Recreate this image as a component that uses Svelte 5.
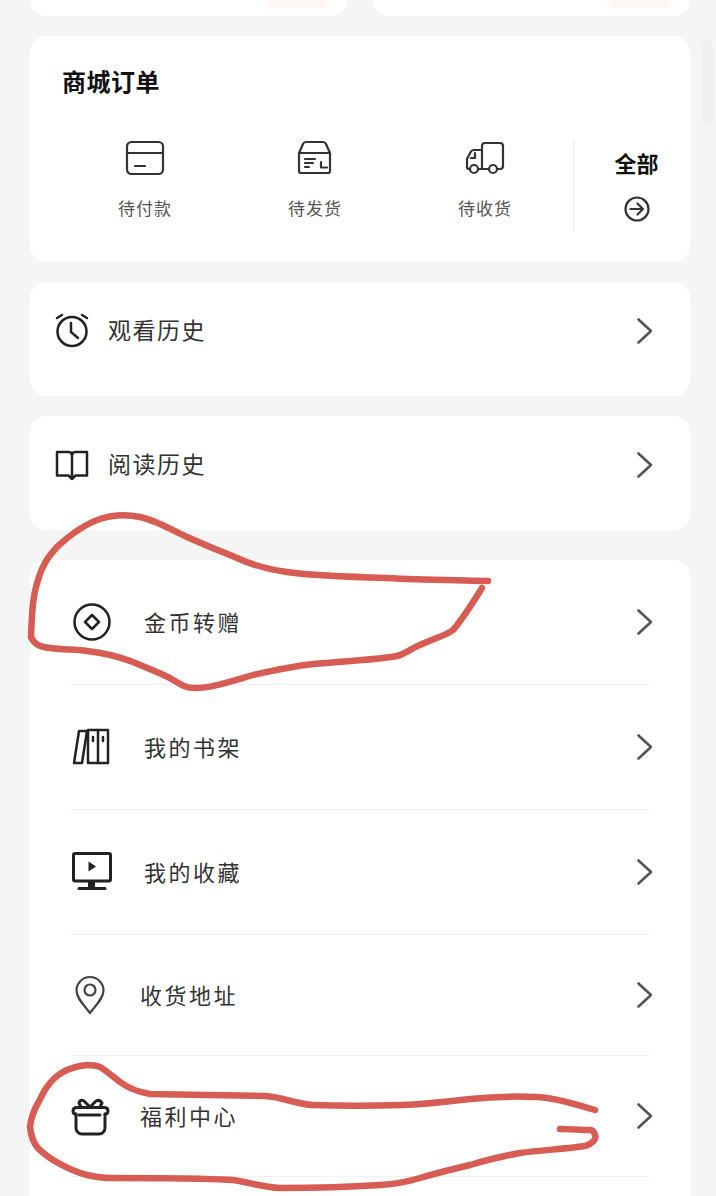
<script>
  const orders = [
    { label: '待付款', icon: 'card' },
    { label: '待发货', icon: 'box' },
    { label: '待收货', icon: 'truck' }
  ];
  const history = [
    { label: '观看历史', icon: 'clock' },
    { label: '阅读历史', icon: 'book' }
  ];
  const menu = [
    { label: '金币转赠', icon: 'coin' },
    { label: '我的书架', icon: 'shelf' },
    { label: '我的收藏', icon: 'tv' },
    { label: '收货地址', icon: 'pin', tight: true },
    { label: '福利中心', icon: 'gift', tight: true }
  ];
</script>

{#snippet chevron()}
  <svg class="chevron" width="18" height="28" viewBox="0 0 18 28"><path d="M2.5 2.5 L15 14 L2.5 25.5" /></svg>
{/snippet}

{#snippet icon(name)}
  <svg class="icon i-{name}" width="40" height="40" viewBox="0 0 40 40">
    {#if name === 'card'}
      <rect x="2" y="2" width="36" height="32" rx="4.5" />
      <path d="M2 13H38M10 26H20" />
    {:else if name === 'box'}
      <path d="M4 13 L8 4 Q9 2 11 2 H28 Q30 2 31 4 L35 13 V31 Q35 33 33 33 H6 Q4 33 4 31 Z" />
      <path d="M4 13H35M10 19H20M10 23H18M10 27H14M26 22V27.5H32" />
    {:else if name === 'truck'}
      <path d="M17 29 V6 Q17 3 20 3 H35 Q38 3 38 6 V26 Q38 29 35 29 H32 M24 29 H13 M5 29 H4 Q2 29 2 27 V19 L6 11.5 Q7 10 9 10 H17" />
      <circle cx="9" cy="29" r="4" />
      <circle cx="28" cy="29" r="4" />
      <path d="M10 13V18H6" />
    {:else if name === 'clock'}
      <circle cx="20" cy="20.5" r="14.5" />
      <path d="M19 12V21L26 27M5 7L10 4M35 7L30 4" />
    {:else if name === 'book'}
      <path d="M20 10 V34 M20 34 L16.5 30.5 H5 V7 H16 Q20 7 20 10 Q20 7 24 7 H35 V30.5 H23.5 L20 34" />
    {:else if name === 'coin'}
      <circle cx="20" cy="20" r="17.5" />
      <path d="M20 13 L27 20 L20 27 L13 20 Z" />
    {:else if name === 'shelf'}
      <path d="M7 4 H15 L10 36 H2 Z" />
      <rect x="16" y="3" width="20" height="33" />
      <path d="M26 3V36M21 10V14M31 10V14" />
    {:else if name === 'tv'}
      <rect x="1.5" y="1.5" width="37" height="27.5" rx="1.5" />
      <path class="solid" d="M16.5 9.5 L24 14.5 L16.5 19.5 Z" />
      <path class="solid" d="M16 30H23V35H16Z" />
      <path d="M7 36.5H33" />
    {:else if name === 'pin'}
      <path d="M20 38 C14 30 6.5 23 6.5 15.5 A13.5 13.5 0 0 1 33.5 15.5 C33.5 23 26 30 20 38 Z" />
      <circle cx="20" cy="15" r="5.5" />
    {:else if name === 'gift'}
      <path d="M6 18 V32 a6 6 0 0 0 6 6 H29 a6 6 0 0 0 6-6 V18" />
      <path d="M6 18 Q3 18 3 15 Q3 11.5 7 11.5 H34 Q38 11.5 38 15 Q38 18 35 18" />
      <path d="M9 19H30M20 11 L14 5 Q10 3 9 7 L11 11 M20 11 L26 5 Q30 3 32 7 L30 11" />
    {/if}
  </svg>
{/snippet}

<div class="page">
  <div class="top">
    <div class="stub"><span class="tint"></span></div>
    <div class="stub"><span class="tint"></span></div>
  </div>

  <section class="card orders">
    <h2>商城订单</h2>
    <div class="order-row">
      {#each orders as o}
        <div class="order">
          {@render icon(o.icon)}
          <span>{o.label}</span>
        </div>
      {/each}
      <div class="all">
        <strong>全部</strong>
        <svg class="icon i-arrow" width="26" height="26" viewBox="0 0 26 26">
          <circle cx="13" cy="13" r="11.5" />
          <path d="M6.5 13H19M13.5 7.5L19 13L13.5 18.5" />
        </svg>
      </div>
    </div>
  </section>

  {#each history as h}
    <section class="card history">
      {@render icon(h.icon)}
      <span>{h.label}</span>
      {@render chevron()}
    </section>
  {/each}

  <section class="card menu">
    {#each menu as m}
      <div class="menu-row" class:tight={m.tight}>
        <div class="menu-icon">{@render icon(m.icon)}</div>
        <span>{m.label}</span>
        {@render chevron()}
      </div>
    {/each}
  </section>

  <svg class="scribble" width="716" height="1196" viewBox="0 0 716 1196">
    <path d="M488 581 C450 580 420 580 387 578 C350 577 315 576 287 572 C265 569 250 564 237 558 C220 551 205 545 187 537 C170 529 155 520 140 517 C130 515 115 514 100 519 C85 524 70 535 57 547 C47 558 42 566 38 580 C33 595 32 610 31 637 C35 645 40 647 50 648 C65 650 75 649 87 651 C105 653 120 657 133 662 C150 669 160 673 170 678 C180 684 185 688 195 688 C210 688 225 683 253 675 C275 670 295 666 313 664 C345 661 375 660 397 656 C405 654 412 648 420 645 C435 638 445 636 453 630 C462 620 472 604 482 588" />
    <path d="M595 1110 C575 1104 555 1098 537 1097 C515 1096 490 1097 470 1099 C445 1102 425 1104 403 1105 C370 1106 340 1106 313 1105 C295 1104 283 1097 265 1096 C225 1095 190 1095 150 1094 C138 1092 128 1088 120 1082 C113 1077 107 1071 100 1067 C95 1065 92 1065 87 1065 C78 1066 70 1068 63 1072 C56 1076 51 1081 47 1087 C43 1092 41 1098 38 1103 C34 1110 31 1118 30 1127 C31 1135 33 1142 37 1147 C41 1152 47 1156 53 1160 C63 1166 75 1172 87 1175 C95 1177 104 1178 113 1178 C155 1178 195 1178 233 1180 C248 1182 262 1187 280 1188 C315 1188 350 1187 380 1185 C395 1184 407 1182 420 1178 C437 1173 453 1169 470 1165 C487 1160 503 1156 520 1153 C542 1150 565 1149 585 1146 C592 1144 597 1139 595 1135 C594 1131 592 1130 590 1130 C580 1130 570 1129 560 1129" />
  </svg>
</div>

<style>
  :global(body) {
    margin: 0;
    background: #f5f5f5;
  }

  .page {
    position: relative;
    width: 716px;
    height: 1196px;
    overflow: hidden;
    background: #f5f5f5;
    font-family: "Noto Sans CJK SC", sans-serif;
    color: #222;
  }

  .page::after {
    content: '';
    position: absolute;
    left: 702px;
    top: 40px;
    width: 11px;
    height: 84px;
    border-radius: 5px;
    background: #eff0f4;
  }

  .top {
    display: flex;
    gap: 26px;
    padding: 0 26px 0 30px;
    height: 36px;
  }

  .stub {
    flex: 1;
    height: 16px;
    background: #fff;
    border-radius: 0 0 16px 16px;
    position: relative;
    overflow: hidden;
  }

  .tint {
    position: absolute;
    right: 20px;
    top: -2px;
    width: 60px;
    height: 10px;
    background: #fdf4f1;
    filter: blur(3px);
  }

  .card {
    background: #fff;
    border-radius: 16px;
    margin: 0 26px 20px 30px;
  }

  .icon {
    fill: none;
    stroke: #222;
    stroke-width: 2.5;
    stroke-linejoin: round;
    stroke-linecap: round;
    flex: none;
  }

  .icon .solid {
    fill: #222;
    stroke: none;
  }

  .i-card,
  .i-box,
  .i-truck,
  .i-arrow {
    stroke: #333;
    stroke-width: 2.2;
  }

  .i-pin {
    stroke: #444;
    stroke-width: 2.2;
  }

  .i-tv,
  .i-gift {
    stroke-width: 3;
  }

  .chevron {
    fill: none;
    stroke: #555;
    stroke-width: 2.6;
    stroke-linecap: round;
    stroke-linejoin: round;
    flex: none;
  }

  .orders {
    height: 226px;
    box-sizing: border-box;
    padding: 30px 0 0 32px;
  }

  h2 {
    margin: 0;
    font-size: 24px;
    line-height: 30px;
    font-weight: 700;
    letter-spacing: 0.5px;
    color: #111;
  }

  .order-row {
    display: flex;
    margin: 44px 0 0 -2px;
    height: 92px;
  }

  .order {
    width: 170px;
    display: flex;
    flex-direction: column;
    align-items: center;
    gap: 18px;
    font-size: 17px;
    line-height: 20px;
    letter-spacing: 1px;
    color: #555;
  }

  .all {
    flex: 1;
    margin-left: 3px;
    border-left: 1px solid #ececec;
    display: flex;
    flex-direction: column;
    align-items: center;
    gap: 21px;
    padding: 9px 0 0 9px;
    font-size: 22px;
    line-height: 26px;
    color: #111;
  }

  .history {
    height: 114px;
    box-sizing: border-box;
    display: flex;
    align-items: flex-start;
    padding: 29px 36px 0 22px;
    gap: 16px;
    font-size: 23px;
    line-height: 36px;
    letter-spacing: 1.5px;
    color: #333;
  }

  .history span {
    flex: 1;
  }

  .history .chevron {
    margin-top: 6px;
  }

  .menu {
    padding: 0 40px;
    margin-top: 30px;
    height: 700px;
    box-sizing: border-box;
  }

  .menu-row {
    display: flex;
    align-items: center;
    height: 124px;
    border-bottom: 1px solid #f1f1f1;
    font-size: 22px;
    letter-spacing: 2.5px;
    color: #333;
  }

  .menu-row.tight {
    height: 120px;
  }

  .menu-row span {
    flex: 1;
    margin-top: -3px;
  }

  .menu-icon {
    width: 74px;
    display: flex;
    padding-left: 2px;
    box-sizing: border-box;
  }

  .menu-row.tight .menu-icon {
    width: 70px;
    padding-left: 0;
  }

  .menu-row .chevron {
    margin-right: -4px;
  }

  .scribble {
    position: absolute;
    left: 0;
    top: 0;
    fill: none;
    stroke: #d75c53;
    stroke-width: 6.5;
    stroke-linecap: round;
    stroke-linejoin: round;
    pointer-events: none;
  }
</style>
